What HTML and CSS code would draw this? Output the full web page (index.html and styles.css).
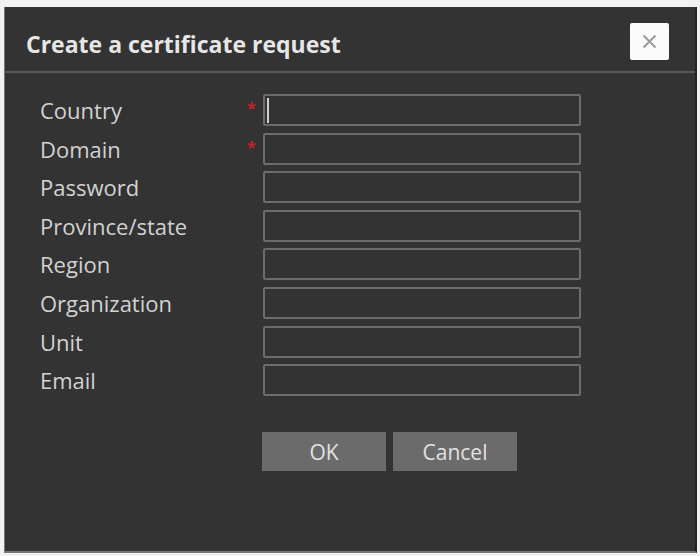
FILE: index.html
```html
<!DOCTYPE html>
<html lang="en">
<head>
<meta charset="utf-8">
<title>Create a certificate request</title>
<link rel="stylesheet" href="styles.css">
</head>
<body>
<div class="dialog">
  <div class="dialog-header">
    <h1 class="dialog-title">Create a certificate request</h1>
    <button class="close-btn" type="button" aria-label="Close">
      <svg width="15" height="15" viewBox="0 0 15 15"><path d="M1.5 1.5 L13.5 13.5 M13.5 1.5 L1.5 13.5" stroke="#9a9a9a" stroke-width="2" fill="none"/></svg>
    </button>
  </div>
  <form class="cert-form">
    <label class="field-label">Country</label>
    <span class="required">*</span>
    <div class="field-input focused"><span class="caret"></span></div>

    <label class="field-label">Domain</label>
    <span class="required">*</span>
    <div class="field-input"></div>

    <label class="field-label">Password</label>
    <span></span>
    <div class="field-input"></div>

    <label class="field-label">Province/state</label>
    <span></span>
    <div class="field-input"></div>

    <label class="field-label">Region</label>
    <span></span>
    <div class="field-input"></div>

    <label class="field-label">Organization</label>
    <span></span>
    <div class="field-input"></div>

    <label class="field-label">Unit</label>
    <span></span>
    <div class="field-input"></div>

    <label class="field-label">Email</label>
    <span></span>
    <div class="field-input"></div>
  </form>
  <div class="actions">
    <button class="btn" type="button">OK</button>
    <button class="btn" type="button">Cancel</button>
  </div>
</div>
</body>
</html>
```

FILE: styles.css
```css
html, body {
  margin: 0;
  padding: 0;
}

body {
  background: #f2f2f2;
  width: 700px;
  height: 556px;
  padding: 7px 3px 3px 4px;
  box-sizing: border-box;
  font-family: "Open Sans", "Noto Sans", sans-serif;
}

.dialog {
  box-sizing: border-box;
  width: 693px;
  height: 546px;
  background: #333333;
  border-left: 1px solid #777;
  border-right: 2px solid #222;
  border-bottom: 2px solid #777;
}

.dialog-header {
  height: 64px;
  border-bottom: 2px solid #575757;
  display: flex;
  align-items: flex-start;
  justify-content: space-between;
  padding: 0 26px 0 21px;
}

.dialog-title {
  margin: 22px 0 0;
  font-size: 23px;
  line-height: 30px;
  font-weight: 700;
  color: #e6e6e6;
}

.close-btn {
  width: 39px;
  height: 37px;
  margin-top: 16px;
  padding: 0;
  border: none;
  border-radius: 2px;
  background: #fbfbfb;
  display: flex;
  align-items: center;
  justify-content: center;
}

.cert-form {
  display: grid;
  grid-template-columns: 209px 14px 318px;
  grid-auto-rows: 32px;
  row-gap: 6.6px;
  align-items: center;
  padding: 21px 0 0 35px;
}

.field-label {
  font-size: 22px;
  color: #d2d2d2;
}

.required {
  color: #c3202a;
  font-size: 16px;
  font-weight: 700;
  line-height: 1;
  align-self: start;
  margin-top: 6px;
  margin-left: -2px;
}

.field-input {
  box-sizing: border-box;
  height: 32px;
  border: 2px solid #6c6c6c;
  border-radius: 2px;
  background: #333;
  display: flex;
  align-items: center;
  padding-left: 2px;
}

.caret {
  width: 2px;
  height: 25px;
  background: #cfcfcf;
}

.actions {
  display: flex;
  gap: 7px;
  padding: 36px 0 0 257px;
}

.btn {
  width: 124px;
  height: 39px;
  border: none;
  background: #6b6b6b;
  color: #e2e2e2;
  font-family: "Open Sans", "Noto Sans", sans-serif;
  font-size: 21px;
  padding: 0;
}
```
